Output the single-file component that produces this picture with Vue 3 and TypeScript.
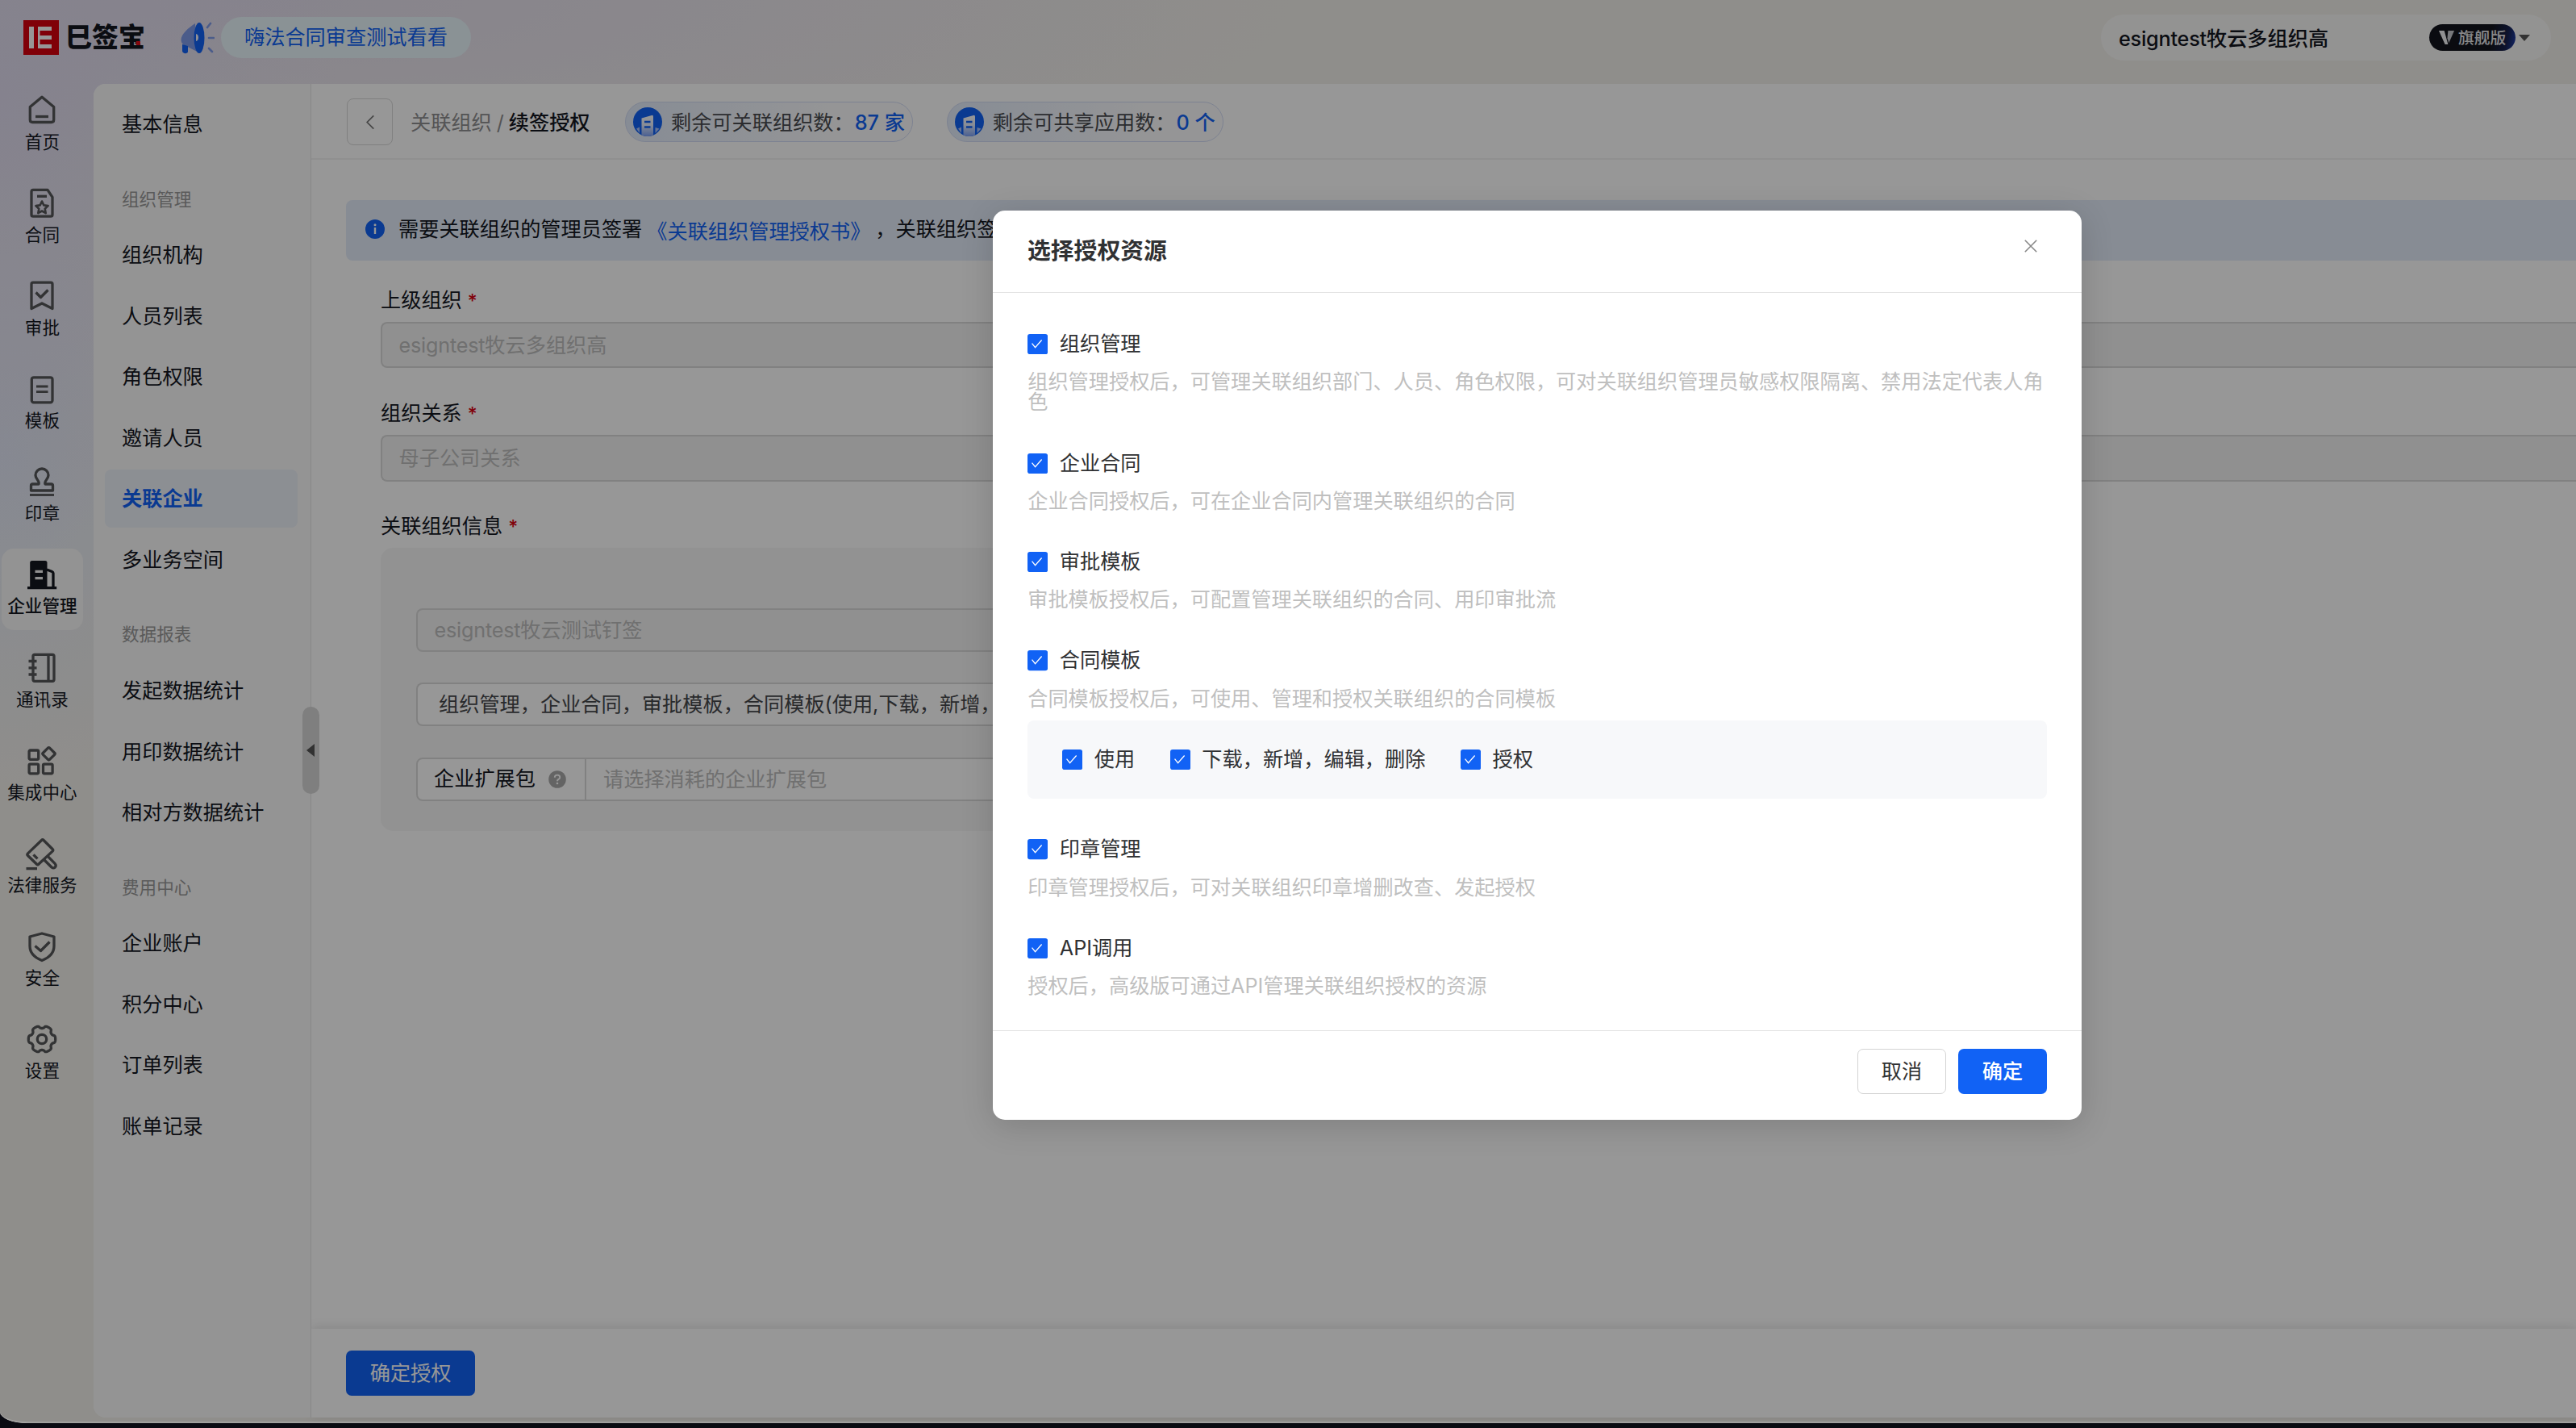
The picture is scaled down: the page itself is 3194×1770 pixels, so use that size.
<script setup lang="ts">
interface NavItem {
  label: string
  icon: string
  active?: boolean
}

interface MenuGroup {
  title?: string
  items: string[]
}

interface Resource {
  name: string
  desc: string
  subs?: string[]
}

const navItems: NavItem[] = [
  { label: '首页', icon: 'home' },
  { label: '合同', icon: 'contract' },
  { label: '审批', icon: 'approve' },
  { label: '模板', icon: 'template' },
  { label: '印章', icon: 'seal' },
  { label: '企业管理', icon: 'company', active: true },
  { label: '通讯录', icon: 'contacts' },
  { label: '集成中心', icon: 'apps' },
  { label: '法律服务', icon: 'law' },
  { label: '安全', icon: 'shield' },
  { label: '设置', icon: 'gear' },
]

const menuGroups: MenuGroup[] = [
  { items: ['基本信息'] },
  { title: '组织管理', items: ['组织机构', '人员列表', '角色权限', '邀请人员', '关联企业', '多业务空间'] },
  { title: '数据报表', items: ['发起数据统计', '用印数据统计', '相对方数据统计'] },
  { title: '费用中心', items: ['企业账户', '积分中心', '订单列表', '账单记录'] },
]
const activeMenu = '关联企业'

const quotas = [
  { label: '剩余可关联组织数：', value: '87 家' },
  { label: '剩余可共享应用数：', value: '0 个' },
]

const resources: Resource[] = [
  {
    name: '组织管理',
    desc: '组织管理授权后，可管理关联组织部门、人员、角色权限，可对关联组织管理员敏感权限隔离、禁用法定代表人角色',
  },
  { name: '企业合同', desc: '企业合同授权后，可在企业合同内管理关联组织的合同' },
  { name: '审批模板', desc: '审批模板授权后，可配置管理关联组织的合同、用印审批流' },
  {
    name: '合同模板',
    desc: '合同模板授权后，可使用、管理和授权关联组织的合同模板',
    subs: ['使用', '下载，新增，编辑，删除', '授权'],
  },
  { name: '印章管理', desc: '印章管理授权后，可对关联组织印章增删改查、发起授权' },
  { name: 'API调用', desc: '授权后，高级版可通过API管理关联组织授权的资源' },
]

// Six-lobed cog outline around (20, 20)
const gearPath = (() => {
  const pts: string[] = []
  for (let i = 0; i < 120; i++) {
    const a = (i / 120) * Math.PI * 2
    const r = 15 + 1.7 * Math.tanh(2.2 * (Math.cos(6 * a) + 0.35))
    pts.push(`${(20 + r * Math.cos(a)).toFixed(2)} ${(20 + r * Math.sin(a)).toFixed(2)}`)
  }
  return `M${pts.join('L')}Z`
})()
</script>

<template>
  <div class="screen">
    <div class="window">
      <header class="top">
        <div class="brand">
          <svg class="brand-mark" viewBox="0 0 44 43">
            <rect width="44" height="43" fill="#d8000f" />
            <path d="M7 8h6v27H7z" fill="#fff" />
            <path d="M18 8h17v5H20.500v6H35v5H20.500v6H35v5H18z" fill="#fff" />
          </svg>
          <span class="brand-name">巳签宝<i class="brand-dot"></i></span>
        </div>
        <svg class="horn" viewBox="0 0 42 40">
          <path d="M18 2C9 8 1 15 0.500 22c0 5 4 8 8 9l12 6z" fill="#7f9bea" />
          <path d="M2 28l7 2v7c0 3-7 3-7-1z" fill="#1162f5" />
          <ellipse cx="23" cy="20" rx="6.500" ry="19" fill="#1162f5" />
          <path d="M19 15c4 0 4 9 0 9z" fill="#f3f3fb" />
          <path d="M33 7l4-5M35 20h6M35 33l4 4" stroke="#7f9bea" stroke-width="2.600" stroke-linecap="round" fill="none" />
        </svg>
        <div class="notice">嗨法合同审查测试看看</div>
        <div class="account">
          <span class="account-name"><span class="lat">esigntest</span>牧云多组织高</span>
          <span class="badge">
            <svg viewBox="0 0 22 22">
              <path d="M1 2h7l5 18H9z" fill="#f4f4f6" />
              <path d="M13 2h8l-7 16-2-6z" fill="#c9cbd2" />
            </svg>
            旗舰版
          </span>
          <i class="caret"></i>
        </div>
      </header>

      <div class="body">
        <nav class="rail">
          <div v-for="n in navItems" :key="n.icon" class="rail-item" :class="{ on: n.active }">
            <svg viewBox="0 0 40 40" class="rail-icon">
              <template v-if="n.icon === 'home'">
                <path d="M20 4.200L34.700 16.500V32.500q0 3-3 3H8.300q-3 0-3-3V16.500Z" />
                <path d="M12 28.500h16" />
              </template>
              <template v-else-if="n.icon === 'contract'">
                <path d="M9 4.400h18l6 9V35q0 2.200-2.200 2.200H9Q7 37.200 7 35V6.500Q7 4.400 9 4.400Z" />
                <path d="M14 12.300h12" />
                <path d="M20 18.500l2.300 4.900 5.300.700-3.900 3.700 1 5.300-4.700-2.600-4.700 2.600 1-5.300-3.900-3.700 5.300-.700Z" stroke-width="2.600" />
              </template>
              <template v-else-if="n.icon === 'approve'">
                <path d="M9 4.200h22q2 0 2 2V36.500L20 30 7 36.500V6.200q0-2 2-2Z" />
                <path d="M12.500 16.500l6 6 9-9" />
              </template>
              <template v-else-if="n.icon === 'template'">
                <rect x="7.300" y="5.800" width="25.700" height="31" rx="2.500" />
                <path d="M13 17h14.500M13 23.700h14.500" stroke-width="2.800" />
              </template>
              <template v-else-if="n.icon === 'seal'">
                <path d="M6.500 31V25q0-2 2-2H16c1.500-4-4-6-4-11a8 8 0 0 1 16 0c0 5-5.500 7-4 11h7.500q2 0 2 2v6Z" />
                <path d="M5 36.500h30" stroke-width="2.800" />
              </template>
              <template v-else-if="n.icon === 'company'">
                <path d="M5.200 36V5.500Q5.200 3 7.700 3H24q2.500 0 2.500 2.500V36Z" fill="#14171f" stroke="none" />
                <path d="M26 14l6.500 2.500q1.500.600 1.500 2V36" />
                <path d="M2 36.700h36.200" />
                <path d="M11.500 16.300H21M11.500 24.700H21" stroke="#f4f4f4" />
              </template>
              <template v-else-if="n.icon === 'contacts'">
                <rect x="9" y="4.300" width="26" height="33" rx="2" />
                <path d="M28 4.500v32.500M3.500 12.500h10M3.500 20.800h10M3.500 29h10" />
              </template>
              <template v-else-if="n.icon === 'apps'">
                <rect x="4.100" y="8" width="11.600" height="11.300" rx="1.500" />
                <rect x="4.100" y="25.200" width="11.600" height="11.600" rx="1.500" />
                <rect x="21.500" y="25.200" width="11.600" height="11.600" rx="1.500" />
                <rect x="22.700" y="6.500" width="11.600" height="11.600" rx="1.500" transform="rotate(45 28.500 12.300)" />
              </template>
              <template v-else-if="n.icon === 'law'">
                <path d="M19.500 3.500q1.300-1.300 2.600 0l11 11q1.300 1.300 0 2.600L16 33q-1.300 1.300-2.600 0L2.500 22.500q-1.300-1.300 0-2.600Z" />
                <path d="M22.500 27.500l9.500 9.500q2.300 1.800 4.300 0 1.800-2.200 0-4.300L27 23.200" />
                <path d="M9.500 21.400l5 5" />
                <path d="M0.500 38.600H14" />
              </template>
              <template v-else-if="n.icon === 'shield'">
                <path d="M20 4l15 4v11.500C35 28 29 34 20 37.500 11 34 5 28 5 19.500V8Z" />
                <path d="M11.500 19.500l7 6 11-11" />
              </template>
              <template v-else>
                <path :d="gearPath" />
                <circle cx="20" cy="20" r="5.700" />
              </template>
            </svg>
            <span>{{ n.label }}</span>
          </div>
        </nav>

        <div class="sheet">
          <aside class="menu">
            <template v-for="(g, i) in menuGroups" :key="i">
              <div v-if="g.title" class="menu-title">{{ g.title }}</div>
              <div class="menu-list">
                <div v-for="m in g.items" :key="m" class="menu-item" :class="{ on: m === activeMenu }">{{ m }}</div>
              </div>
            </template>
            <div class="fold"><i></i></div>
          </aside>

          <main class="main">
            <div class="crumbs">
              <div class="back">
                <svg viewBox="0 0 12 20"><path d="M10.500 1.500L2 10l8.500 8.500" /></svg>
              </div>
              <div class="trail"><span>关联组织</span><span class="slash">/</span><b>续签授权</b></div>
              <div v-for="q in quotas" :key="q.label" class="quota">
                <svg viewBox="0 0 36 36">
                  <defs>
                    <linearGradient id="bld" x1="0" y1="0" x2="0" y2="1">
                      <stop offset="0" stop-color="#fff" />
                      <stop offset="0.450" stop-color="#e6eefe" />
                      <stop offset="1" stop-color="#7ea2f6" />
                    </linearGradient>
                  </defs>
                  <circle cx="18" cy="18" r="18" fill="#1162f5" />
                  <path d="M10.500 13.500l12.500-3.600q2-.400 2 1.600V34.500q-7.500 3-14.500 0Z" fill="url(#bld)" />
                  <path d="M4 26.500l4-2v7.500ZM27.500 25l5 1.500-5 5.500Z" fill="#a9c2fb" />
                  <path d="M14 18h7.500M14 24.500h7.500" stroke="#1162f5" stroke-width="2.400" />
                </svg>
                <span>{{ q.label }}</span><b>{{ q.value }}</b>
              </div>
            </div>

            <div class="content">
              <div class="alert">
                <svg viewBox="0 0 24 24">
                  <circle cx="12" cy="12" r="12" fill="#1162f5" />
                  <path d="M12 10v8" stroke="#fff" stroke-width="2.400" />
                  <circle cx="12" cy="6.800" r="1.500" fill="#fff" />
                </svg>
                <span>需要关联组织的管理员签署</span><a>《关联组织管理授权书》</a><span>，关联组织签</span>
              </div>

              <div class="form">
                <div class="label">上级组织<em>*</em></div>
                <div class="field off"><span class="lat">esigntest</span>牧云多组织高</div>
                <div class="label">组织关系<em>*</em></div>
                <div class="field off">母子公司关系</div>
                <div class="label">关联组织信息<em>*</em></div>
                <div class="box">
                  <div class="field off small"><span class="lat">esigntest</span>牧云测试钉签</div>
                  <div class="field small scope">组织管理，企业合同，审批模板，合同模板(使用,下载，新增，</div>
                  <div class="combo">
                    <div class="combo-name">
                      企业扩展包
                      <svg viewBox="0 0 22 22">
                        <circle cx="11" cy="11" r="10.800" fill="#aaa" />
                        <path d="M7.800 8.800q0-3.200 3.200-3.200t3.200 2.800q0 1.600-1.700 2.500-1.500.800-1.500 2.300" fill="none" stroke="#fff" stroke-width="1.900" />
                        <circle cx="11" cy="16" r="1.300" fill="#fff" />
                      </svg>
                    </div>
                    <div class="combo-value">请选择消耗的企业扩展包</div>
                  </div>
                </div>
              </div>
            </div>

            <footer class="actions"><button class="primary wide">确定授权</button></footer>
          </main>
        </div>
      </div>

      <div class="mask">
        <section class="dialog">
          <div class="dialog-head">
            <h2>选择授权资源</h2>
            <svg viewBox="0 0 16 16"><path d="M0.800 0.800l14.400 14.400M15.200 0.800L0.800 15.200" /></svg>
          </div>
          <div class="dialog-body">
            <div v-for="r in resources" :key="r.name" class="res">
              <div class="check">
                <svg viewBox="0 0 25 25"><rect width="25" height="25" rx="3" /><path d="M5.500 11.500l4 5 8-9" /></svg>
                <span>{{ r.name }}</span>
              </div>
              <p>{{ r.desc }}</p>
              <div v-if="r.subs" class="subs">
                <div v-for="s in r.subs" :key="s" class="check">
                  <svg viewBox="0 0 25 25"><rect width="25" height="25" rx="3" /><path d="M5.500 11.500l4 5 8-9" /></svg>
                  <span>{{ s }}</span>
                </div>
              </div>
            </div>
          </div>
          <div class="dialog-foot">
            <button class="plain">取消</button>
            <button class="primary">确定</button>
          </div>
        </section>
      </div>
    </div>
  </div>
</template>

<style>
body {
  margin: 0;
  overflow: hidden;
}
</style>

<style scoped>
.screen {
  width: 3194px;
  height: 1770px;
  overflow: hidden;
  background: #0a0b12;
  font-family: Inter, 'Noto Sans CJK SC', sans-serif;
  font-size: 25.2px;
  line-height: 36px;
  color: #14171f;
}
.screen * {
  box-sizing: border-box;
}
.window {
  position: relative;
  display: flex;
  flex-direction: column;
  height: 1764px;
  overflow: hidden;
  border-radius: 0 0 0 34px / 0 0 0 14px;
  background:
    radial-gradient(ellipse 420px 560px at 0 120px, #e0dcf0 0%, rgba(224, 220, 240, 0) 100%),
    radial-gradient(ellipse 300px 420px at 0 560px, #e3e9f7 0%, rgba(227, 233, 247, 0) 100%),
    radial-gradient(ellipse 1300px 260px at 300px 0, #e4deed 0%, rgba(228, 222, 237, 0) 100%),
    #f2f0eb;
}
.lat {
  letter-spacing: -0.2px;
}

.top {
  display: flex;
  align-items: center;
  flex: none;
  height: 104px;
  padding: 0 31px 11px 29px;
}
.brand {
  display: flex;
  align-items: center;
}
.brand-mark {
  width: 44px;
  height: 43px;
}
.brand-name {
  position: relative;
  margin-left: 8px;
  font-size: 33px;
  line-height: 43px;
  font-weight: 900;
  color: #14171f;
}
.brand-dot {
  position: absolute;
  right: 6px;
  bottom: 12px;
  width: 5px;
  height: 5px;
  background: #e0101c;
}
.horn {
  width: 42px;
  height: 40px;
  margin-left: 44px;
}
.notice {
  height: 51px;
  margin-left: 8px;
  padding: 0 29px;
  border-radius: 26px;
  background: #eaf6fb;
  color: #1162f5;
  line-height: 50px;
}
.account {
  display: flex;
  align-items: center;
  width: 558px;
  height: 57px;
  margin-left: auto;
  padding-left: 22px;
  border-radius: 29px;
  background: #f9f8f7;
}
.account-name {
  flex: none;
  width: 385px;
  padding-top: 2px;
  font-weight: 500;
}
.badge {
  display: flex;
  align-items: center;
  width: 107px;
  height: 33px;
  padding-left: 11px;
  border-radius: 17px;
  background: linear-gradient(100deg, #12141c 70%, #16204c 88%, #1e3fb0);
  color: #e6e6ea;
  font-size: 19.800px;
  font-weight: 500;
  white-space: nowrap;
}
.badge svg {
  width: 21px;
  height: 21px;
  margin-right: 4px;
}
.caret {
  margin-left: 4px;
  border: 7px solid transparent;
  border-top: 8px solid #555;
  border-bottom: 0;
}

.body {
  display: flex;
  flex: none;
  height: 1652.500px;
}
.rail {
  display: flex;
  flex-direction: column;
  flex: none;
  gap: 14.400px;
  width: 116px;
  padding-left: 2px;
}
.rail-item {
  display: flex;
  flex-direction: column;
  align-items: center;
  width: 100.800px;
  height: 100.800px;
  padding-top: 12px;
  border-radius: 15px;
  font-size: 21.600px;
  line-height: 30px;
  white-space: nowrap;
}
.rail-item.on {
  background: #f9f8f8;
  font-weight: 500;
}
.rail-icon {
  flex: none;
  width: 40px;
  height: 40px;
  margin-bottom: 4.500px;
  overflow: visible;
  fill: none;
  stroke: #555659;
  stroke-width: 3.300;
  stroke-linejoin: round;
}
.on .rail-icon {
  stroke: #14171f;
}

.sheet {
  display: flex;
  flex: 1;
  min-width: 0;
  border-radius: 15px 0 0 15px;
  background: #fff;
}
.menu {
  position: relative;
  flex: none;
  width: 270px;
  padding: 14px 16px 0 14px;
  border-right: 1px solid #e4e4e6;
  border-radius: 15px 0 0 15px;
  background: #fafafa;
}
.menu-title {
  height: 90px;
  padding: 41.500px 0 0 21px;
  color: #999;
  font-size: 21.600px;
  line-height: 30px;
}
.menu-list {
  display: flex;
  flex-direction: column;
  gap: 3.600px;
}
.menu-item {
  height: 72px;
  padding-left: 21px;
  border-radius: 8px;
  line-height: 72px;
}
.menu-item.on {
  background: #ecf1f9;
  color: #1162f5;
  font-weight: 700;
}
.fold {
  position: absolute;
  right: -11px;
  top: 772px;
  display: flex;
  align-items: center;
  justify-content: center;
  width: 21px;
  height: 108px;
  padding-right: 2px;
  border-radius: 11px;
  background: #d6d6d6;
}
.fold i {
  border: 8px solid transparent;
  border-right: 10px solid #555;
  border-left: 0;
}

.main {
  display: flex;
  flex-direction: column;
  flex: 1;
  min-width: 0;
}
.crumbs {
  display: flex;
  align-items: center;
  flex: none;
  height: 94px;
  padding-left: 44px;
  border-bottom: 2px solid #f3f3f3;
}
.back {
  display: flex;
  align-items: center;
  justify-content: center;
  width: 57px;
  height: 58px;
  margin-top: 2px;
  border: 1.500px solid #d8d8d8;
  border-radius: 8px;
}
.back svg {
  width: 12px;
  height: 19px;
  fill: none;
  stroke: #777;
  stroke-width: 1.800;
}
.trail {
  width: 266px;
  margin-left: 22px;
  padding-top: 3px;
  color: #8e8e90;
  white-space: nowrap;
}
.slash {
  display: inline-block;
  width: 21px;
  text-align: center;
}
.trail b {
  font-weight: 500;
  color: #14171f;
}
.quota {
  display: flex;
  align-items: center;
  height: 50px;
  margin: 1px 42px 0 0;
  padding: 0 9px 0 9px;
  border: 1.500px solid #d3dcf5;
  border-radius: 25px;
  background: linear-gradient(90deg, #e4edfb, #fcfcfe 75%);
  color: #4a4b50;
  white-space: nowrap;
}
.quota svg {
  width: 36px;
  height: 36px;
  margin-right: 11px;
}
.quota span,
.quota b {
  padding-top: 2px;
}
.quota b {
  margin-left: 1px;
  color: #1162f5;
  font-weight: 500;
}

.content {
  flex: 1;
  min-height: 0;
  padding: 50px 0 0 43px;
}
.alert {
  display: flex;
  align-items: center;
  height: 75px;
  padding: 0 0 4px 24px;
  border-radius: 8px 0 0 8px;
  background: #e5edfa;
  white-space: nowrap;
}
.alert svg {
  width: 24px;
  height: 24px;
  margin-right: 17px;
}
.alert a {
  margin: 7px 6px 0 6px;
  color: #1162f5;
}
.form {
  padding: 30.500px 0 0 43px;
}
.label {
  height: 45.200px;
}
.label em {
  margin-left: 7px;
  color: #d9000f;
  font-style: normal;
  font-size: 23px;
  font-weight: 500;
}
.field {
  height: 57.600px;
  margin-bottom: 37.500px;
  padding-left: 20.500px;
  border: 2px solid #dadada;
  border-right: 0;
  border-radius: 8px 0 0 8px;
  line-height: 54px;
  white-space: nowrap;
  overflow: hidden;
}
.off {
  background: #f4f4f4;
  color: #bdbdbd;
}
.box {
  display: flex;
  flex-direction: column;
  gap: 38.400px;
  width: 2060px;
  height: 351px;
  padding: 74.500px 44px 0;
  border-radius: 15px;
  background: #f7f7f7;
}
.small {
  flex: none;
  height: 54px;
  margin: 0;
  line-height: 51px;
}
.scope {
  padding-left: 26px;
  background: #fff;
  color: #46474b;
}
.combo {
  display: flex;
  flex: none;
  height: 54px;
  border: 2px solid #dadada;
  border-radius: 8px;
  background: #fff;
  line-height: 51px;
}
.combo-name {
  display: flex;
  align-items: center;
  width: 209px;
  padding-left: 20px;
  border-right: 2px solid #dadada;
}
.combo-name svg {
  width: 22px;
  height: 22px;
  margin-left: 16px;
}
.combo-value {
  padding-left: 21px;
  color: #bdbdbd;
}
.actions {
  flex: none;
  height: 110px;
  padding: 27px 0 0 43px;
  background: #fff;
  box-shadow: 0 -2px 12px rgba(0, 0, 0, 0.11);
}

button {
  display: block;
  width: 110px;
  height: 56px;
  padding: 0;
  border: 0;
  border-radius: 7px;
  font: inherit;
}
.primary {
  background: #1162f5;
  color: #fff;
  font-weight: 500;
}
.wide {
  width: 160px;
  font-weight: 400;
}
.plain {
  border: 1.500px solid #d4d4d4;
  background: #fff;
  color: #303133;
}

.mask {
  position: absolute;
  inset: 0;
  border-bottom: 2px solid rgba(170, 170, 170, 0.6);
  border-radius: 0 0 0 34px / 0 0 0 14px;
  background: rgba(0, 0, 0, 0.408);
}
.dialog {
  display: flex;
  flex-direction: column;
  width: 1350px;
  height: 1127px;
  margin: 261px 0 0 1231px;
  border-radius: 15px;
  background: #fff;
  box-shadow: 0 7px 40px rgba(0, 0, 0, 0.16);
  color: #303133;
}
.dialog-head {
  display: flex;
  flex: none;
  justify-content: space-between;
  height: 102px;
  padding: 32px 55px 0 43px;
  border-bottom: 1px solid #e2e2e2;
}
.dialog-head h2 {
  margin: 0;
  font-size: 28.800px;
  line-height: 36px;
  font-weight: 700;
}
.dialog-head svg {
  width: 16px;
  height: 16px;
  margin-top: 4px;
  stroke: #888;
  stroke-width: 1.600;
}
.dialog-body {
  flex: 1;
  min-height: 0;
  padding: 51px 43.200px 0;
  line-height: 25.200px;
}
.res {
  margin-bottom: 50px;
}
.check {
  display: flex;
  align-items: center;
  height: 25.200px;
}
.check svg {
  flex: none;
  width: 25.200px;
  height: 25.200px;
  margin-right: 14.400px;
  fill: #1162f5;
}
.check path {
  fill: none;
  stroke: #fff;
  stroke-width: 1.300;
}
.res p {
  margin: 22px 0 0;
  color: #bfbfbf;
}
.subs {
  display: flex;
  align-items: center;
  gap: 43.600px;
  height: 97.200px;
  margin-top: 14px;
  margin-bottom: 50.400px;
  padding-left: 43px;
  border-radius: 8px;
  background: #f7f8fa;
}
.dialog-foot {
  display: flex;
  flex: none;
  justify-content: flex-end;
  gap: 15px;
  height: 111px;
  padding: 22px 43px 0;
  border-top: 1px solid #e2e2e2;
}
</style>
